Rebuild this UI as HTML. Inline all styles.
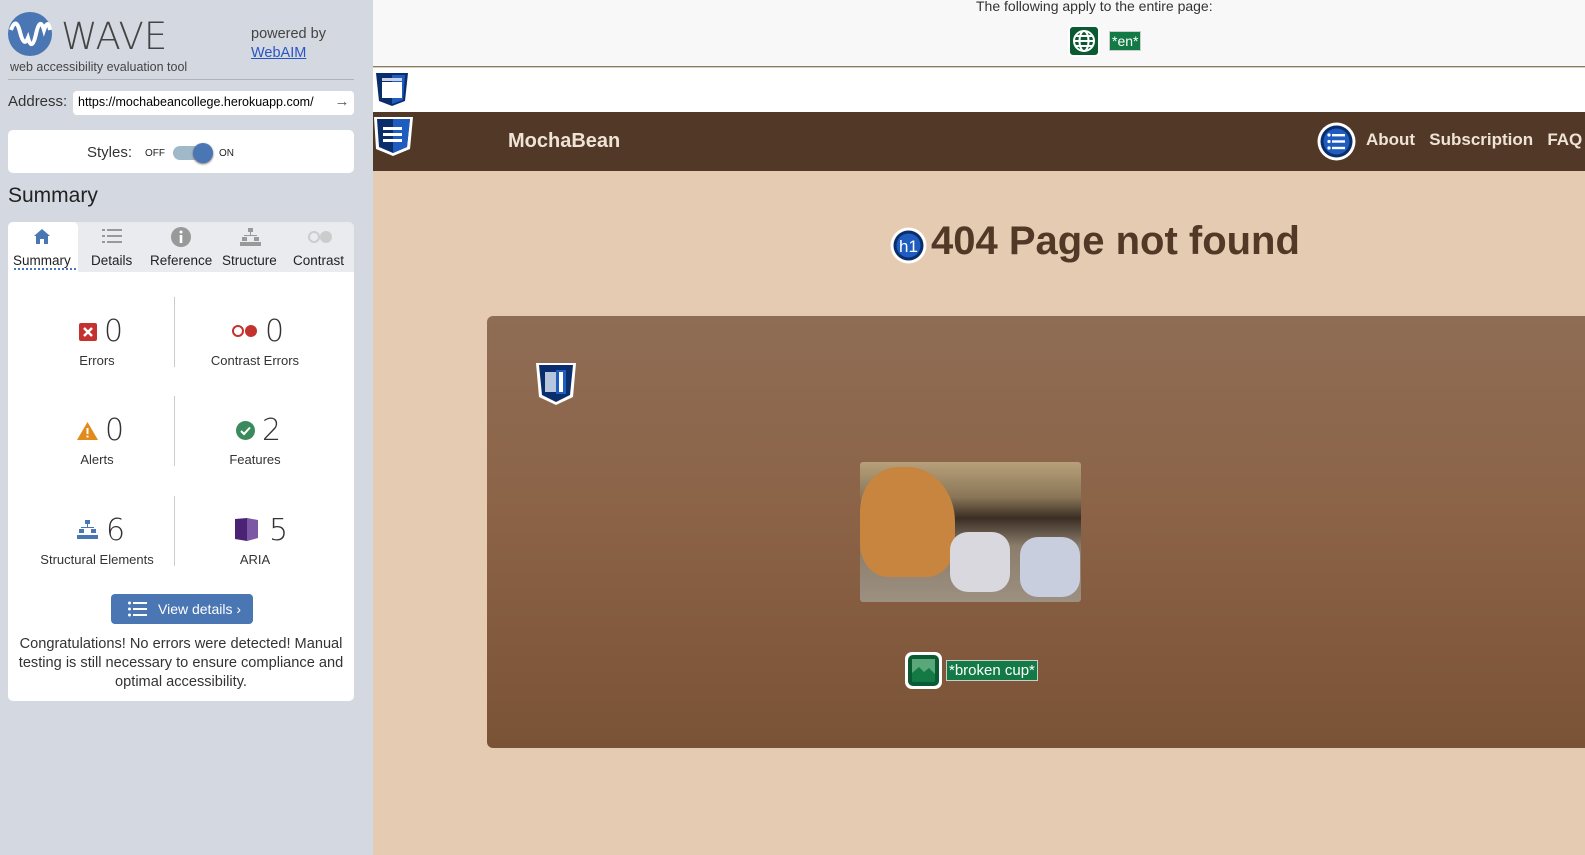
<!DOCTYPE html>
<html><head><meta charset="utf-8"><style>
*{box-sizing:border-box;margin:0;padding:0}
body{width:1585px;height:855px;overflow:hidden;position:relative;font-family:"Liberation Sans",sans-serif;background:#e5cbb1}
.side{position:absolute;left:0;top:0;width:373px;height:855px;background:#d4d8e0;color:#333}
.abs{position:absolute}
.main{position:absolute;left:373px;top:0;right:0;height:855px}
.card{background:#fff;border-radius:5px}
.num{font-size:30px;color:#333;font-family:"DejaVu Sans","Liberation Sans",sans-serif;font-weight:300}
.lbl{font-size:13px;color:#333;text-align:center;width:160px}
.tab{position:absolute;top:222px;font-size:13.5px;color:#222;text-align:center}
</style></head><body>
<div class="side">
  <svg class="abs" style="left:8px;top:12px" width="44" height="44" viewBox="0 0 44 44"><circle cx="22" cy="22" r="22" fill="#4a76b3"/><path d="M3 18 Q8 4 12 20 T20 26 Q24 40 28 22 T36 18 Q40 6 42 18" stroke="#fff" stroke-width="4" fill="none"/></svg>
  <div class="abs" style="left:61px;top:15px;font-size:37px;color:#444;font-family:'DejaVu Sans',sans-serif;font-weight:200;letter-spacing:0px">WAVE</div>
  <div class="abs" style="left:10px;top:60px;font-size:12.5px;color:#444">web accessibility evaluation tool</div>
  <div class="abs" style="left:251px;top:26px;font-size:14.5px;color:#444">powered by</div>
  <div class="abs" style="left:251px;top:45px;font-size:14.5px;color:#2a55c0;text-decoration:underline">WebAIM</div>
  <div class="abs" style="left:8px;top:79px;width:346px;height:1px;background:#b0b4ba"></div>
  <div class="abs" style="left:8px;top:93px;font-size:15px;color:#333">Address:</div>
  <div class="abs card" style="left:73px;top:91px;width:281px;height:24px;border-radius:4px;font-size:12.5px;padding:4px 5px;color:#000;overflow:hidden;white-space:nowrap">https://mochabeancollege.herokuapp.com/<span style="position:absolute;right:0;top:0;background:#fff;width:24px;height:24px;text-align:center;font-size:15px;line-height:22px;color:#555">→</span></div>
  <div class="abs card" style="left:8px;top:130px;width:346px;height:43px"></div>
  <div class="abs" style="left:87px;top:144px;font-size:15px;color:#333">Styles:</div>
  <div class="abs" style="left:145px;top:148px;font-size:10px;color:#222">OFF</div>
  <div class="abs" style="left:173px;top:146px;width:40px;height:14px;border-radius:7px;background:#9fb9c8"></div>
  <div class="abs" style="left:193px;top:143px;width:20px;height:20px;border-radius:10px;background:#4a76b3;box-shadow:0 1px 2px #666"></div>
  <div class="abs" style="left:219px;top:148px;font-size:10px;color:#222">ON</div>
  <div class="abs" style="left:8px;top:184px;font-size:21px;color:#222">Summary</div>
  <div class="abs" style="left:8px;top:222px;width:346px;height:50px;background:#e9ebef;border-radius:5px 5px 0 0"></div>
  <div class="abs" style="left:8px;top:222px;width:70px;height:50px;background:#fff;border-radius:5px 5px 0 0"></div>
  <svg class="abs" style="left:33px;top:228px" width="18" height="17" viewBox="0 0 18 17"><path d="M9 1 L17 8 H15 V16 H11 V11 H7 V16 H3 V8 H1Z" fill="#4a76b3"/></svg>
  <div class="tab" style="left:13px;top:253px">Summary</div>
  <div class="abs" style="left:14px;top:268px;width:62px;border-bottom:2px dotted #4a76b3"></div>
  <svg class="abs" style="left:102px;top:228px" width="20" height="16"><g fill="#999"><rect x="0" y="1" width="3" height="2"/><rect x="5" y="1" width="15" height="2"/><rect x="0" y="7" width="3" height="2"/><rect x="5" y="7" width="15" height="2"/><rect x="0" y="13" width="3" height="2"/><rect x="5" y="13" width="15" height="2"/></g></svg>
  <div class="tab" style="left:91px;top:253px">Details</div>
  <svg class="abs" style="left:171px;top:227px" width="20" height="20"><circle cx="10" cy="10" r="10" fill="#999"/><rect x="8.7" y="8" width="2.6" height="8" fill="#fff"/><circle cx="10" cy="5" r="1.5" fill="#fff"/></svg>
  <div class="tab" style="left:150px;top:253px">Reference</div>
  <svg class="abs" style="left:240px;top:228px" width="21" height="18"><g fill="#999"><rect x="8" y="0" width="5" height="4"/><rect x="10" y="4" width="1" height="3"/><rect x="4" y="7" width="13" height="1"/><rect x="2" y="9" width="5" height="4"/><rect x="14" y="9" width="5" height="4"/><rect x="0" y="14" width="21" height="4"/></g></svg>
  <div class="tab" style="left:222px;top:253px">Structure</div>
  <svg class="abs" style="left:308px;top:230px" width="25" height="14"><circle cx="6" cy="7" r="5" fill="none" stroke="#ccc" stroke-width="2"/><circle cx="18" cy="7" r="6" fill="#ccc"/></svg>
  <div class="tab" style="left:293px;top:253px">Contrast</div>
  <div class="abs" style="left:8px;top:272px;width:346px;height:429px;background:#fff;border-radius:0 0 5px 5px"></div>
  <div class="abs" style="left:174px;top:297px;width:1px;height:70px;background:#ccc"></div>
  <div class="abs" style="left:174px;top:396px;width:1px;height:70px;background:#ccc"></div>
  <div class="abs" style="left:174px;top:496px;width:1px;height:70px;background:#ccc"></div>
  <svg class="abs" style="left:79px;top:323px" width="18" height="18"><rect width="18" height="18" rx="2" fill="#c3322e"/><path d="M5 5 L13 13 M13 5 L5 13" stroke="#fff" stroke-width="2.5"/></svg>
  <div class="abs num" style="left:104px;top:314px">0</div>
  <div class="abs lbl" style="left:17px;top:353px">Errors</div>
  <svg class="abs" style="left:232px;top:324px" width="26" height="14"><circle cx="6" cy="7" r="5" fill="none" stroke="#c3322e" stroke-width="2"/><circle cx="19" cy="7" r="6" fill="#c3322e"/></svg>
  <div class="abs num" style="left:265px;top:314px">0</div>
  <div class="abs lbl" style="left:175px;top:353px">Contrast Errors</div>
  <svg class="abs" style="left:77px;top:422px" width="21" height="18"><path d="M10.5 0 L21 18 H0Z" fill="#e28a1a"/><rect x="9.5" y="6" width="2" height="6" fill="#fff"/><rect x="9.5" y="13.5" width="2" height="2" fill="#fff"/></svg>
  <div class="abs num" style="left:105px;top:413px">0</div>
  <div class="abs lbl" style="left:17px;top:452px">Alerts</div>
  <svg class="abs" style="left:236px;top:421px" width="19" height="19"><circle cx="9.5" cy="9.5" r="9.5" fill="#3b8a5e"/><path d="M5 10 L8 13 L14 6.5" stroke="#fff" stroke-width="2" fill="none"/></svg>
  <div class="abs num" style="left:262px;top:413px">2</div>
  <div class="abs lbl" style="left:175px;top:452px">Features</div>
  <svg class="abs" style="left:77px;top:520px" width="21" height="19"><g fill="#4a76b3"><rect x="8" y="0" width="5" height="4"/><rect x="10" y="4" width="1" height="3"/><rect x="4" y="7" width="13" height="1"/><rect x="2" y="9" width="5" height="4"/><rect x="14" y="9" width="5" height="4"/><rect x="0" y="15" width="21" height="4"/></g></svg>
  <div class="abs num" style="left:106px;top:513px">6</div>
  <div class="abs lbl" style="left:17px;top:552px">Structural Elements</div>
  <svg class="abs" style="left:235px;top:518px" width="23" height="23"><path d="M0 1 L12 0 V23 L0 21Z" fill="#4b2374"/><path d="M12 0 L23 2 V20 L12 23Z" fill="#7c57a4"/></svg>
  <div class="abs num" style="left:269px;top:513px">5</div>
  <div class="abs lbl" style="left:175px;top:552px">ARIA</div>
  <div class="abs" style="left:111px;top:594px;width:142px;height:30px;background:#4a76b3;border-radius:4px;color:#fff;font-size:14px;line-height:30px;padding-left:47px">View details ›</div>
  <svg class="abs" style="left:128px;top:601px" width="19" height="16"><g fill="#fff"><circle cx="1.5" cy="2" r="1.5"/><rect x="5" y="1" width="14" height="2"/><circle cx="1.5" cy="8" r="1.5"/><rect x="5" y="7" width="14" height="2"/><circle cx="1.5" cy="14" r="1.5"/><rect x="5" y="13" width="14" height="2"/></g></svg>
  <div class="abs" style="left:10px;top:635px;width:342px;text-align:center;font-size:14.6px;line-height:19px;color:#333">Congratulations! No errors were detected! Manual testing is still necessary to ensure compliance and optimal accessibility.</div>
</div>
<div class="main">
  <div class="abs" style="left:0;top:0;width:100%;height:67px;background:#f8f8f8;border-bottom:1px solid #7a8070"></div>
  <div class="abs" style="left:603px;top:-2px;font-size:14px;color:#333;white-space:nowrap">The following apply to the entire page:</div>
  <div class="abs" style="left:695px;top:25px;width:32px;height:32px;background:#0a5a32;border-radius:5px;border:2px solid #fff"></div>
  <svg class="abs" style="left:699px;top:29px" width="24" height="24" viewBox="0 0 24 24"><g stroke="#fff" stroke-width="2" fill="none"><circle cx="12" cy="12" r="10"/><ellipse cx="12" cy="12" rx="4.5" ry="10"/><path d="M2 12 H22 M4 7 H20 M4 17 H20"/></g></svg>
  <div class="abs" style="left:736px;top:31px;background:#137a45;color:#fff;font-size:14px;padding:0 2px;border:1px solid #ccc;line-height:18px">*en*</div>
  <div class="abs" style="left:0;top:68px;width:100%;height:44px;background:#fff"></div>
  <svg class="abs" style="left:1px;top:72px" width="36" height="36" viewBox="0 0 36 36"><path d="M2 1 H34 L31 29 L18 34 L5 29Z" fill="#0a2d6b"/><path d="M18 3 H31 L29 28 L18 32Z" fill="#1e5cc0"/><rect x="8" y="6" width="20" height="3" fill="#c8d4e4"/><rect x="8" y="10" width="20" height="16" fill="#fff"/></svg>
  <div class="abs" style="left:0;top:112px;width:100%;height:59px;background:#523826"></div>
  <svg class="abs" style="left:-1px;top:116px" width="42" height="42" viewBox="0 0 42 42"><path d="M2 1 H41 L38 33 L21 40 L4 33Z" fill="#fff"/><path d="M5 3 H38 L35 31 L21 37 L7 31Z" fill="#0a2d6b"/><path d="M21 3 H38 L35 31 L21 37Z" fill="#1e5cc0"/><g fill="#fff"><rect x="11" y="11" width="19" height="3"/><rect x="11" y="17" width="19" height="3"/><rect x="11" y="23" width="19" height="3"/></g></svg>
  <div class="abs" style="left:135px;top:130px;font-size:20px;font-weight:bold;color:#efe3d6">MochaBean</div>
  <svg class="abs" style="left:944px;top:122px" width="39" height="39"><circle cx="19.5" cy="19.5" r="19" fill="#fff"/><circle cx="19.5" cy="19.5" r="16" fill="#0a2d6b"/><circle cx="19.5" cy="19.5" r="13" fill="#1e5cc0"/><g fill="#fff"><circle cx="12" cy="13" r="1.6"/><rect x="15" y="12" width="13" height="2.4"/><circle cx="12" cy="19.5" r="1.6"/><rect x="15" y="18.3" width="13" height="2.4"/><circle cx="12" cy="26" r="1.6"/><rect x="15" y="24.8" width="13" height="2.4"/></g></svg>
  <div class="abs" style="left:993px;top:130px;font-size:17px;font-weight:bold;color:#efe3d6;white-space:nowrap">About &nbsp; Subscription &nbsp; FAQ</div>
  <svg class="abs" style="left:517px;top:227px" width="37" height="37"><circle cx="18.5" cy="18.5" r="18" fill="#fff"/><circle cx="18.5" cy="18.5" r="15" fill="#0a2d6b"/><circle cx="18.5" cy="18.5" r="12" fill="#1e5cc0"/><text x="18.5" y="25" text-anchor="middle" font-family="Liberation Sans" font-size="17" fill="#fff">h1</text></svg>
  <div class="abs" style="left:558px;top:219px;font-size:40px;font-weight:bold;color:#523826">404 Page not found</div>
  <div class="abs" style="left:114px;top:316px;width:1110px;height:432px;border-radius:6px;background:linear-gradient(#8e6d55,#8c6347 45%,#7a5236)"></div>
  <svg class="abs" style="left:162px;top:362px" width="42" height="44" viewBox="0 0 42 44"><path d="M1 1 H41 L38 35 L21 43 L4 35Z" fill="#fff"/><path d="M4 3 H38 L35 33 L21 40 L7 33Z" fill="#0a2d6b"/><rect x="10" y="10" width="11" height="20" fill="#b7c6dc"/><rect x="21" y="8" width="10" height="24" fill="#1e5cc0"/><rect x="24" y="10" width="4" height="20" fill="#fff"/></svg>
  <div class="abs" style="left:487px;top:462px;width:221px;height:140px;border-radius:3px;overflow:hidden;background:linear-gradient(180deg,#b7a07a 0%,#8a7658 25%,#3a2e24 40%,#8b7d6c 60%,#9c9080 100%)">
    <div class="abs" style="left:0;top:5px;width:95px;height:110px;border-radius:40% 50% 30% 30%;background:#c78540"></div>
    <div class="abs" style="left:90px;top:70px;width:60px;height:60px;border-radius:30%;background:#d8d8de"></div>
    <div class="abs" style="left:160px;top:75px;width:60px;height:60px;border-radius:30%;background:#c8cede"></div>
  </div>
  <div class="abs" style="left:532px;top:652px;width:37px;height:37px;border-radius:7px;background:#fff"></div>
  <div class="abs" style="left:535px;top:655px;width:31px;height:31px;border-radius:5px;background:#0a5a32"></div>
  <svg class="abs" style="left:539px;top:659px" width="23" height="23"><rect width="23" height="23" fill="#5aa87a"/><path d="M0 23 V14 L7 8 L12 13 L17 9 L23 15 V23Z" fill="#137a45"/></svg>
  <div class="abs" style="left:573px;top:660px;background:#137a45;color:#fff;font-size:15px;padding:0 2px;border:1px solid #ccc;line-height:19px">*broken cup*</div>
</div>
</body></html>
